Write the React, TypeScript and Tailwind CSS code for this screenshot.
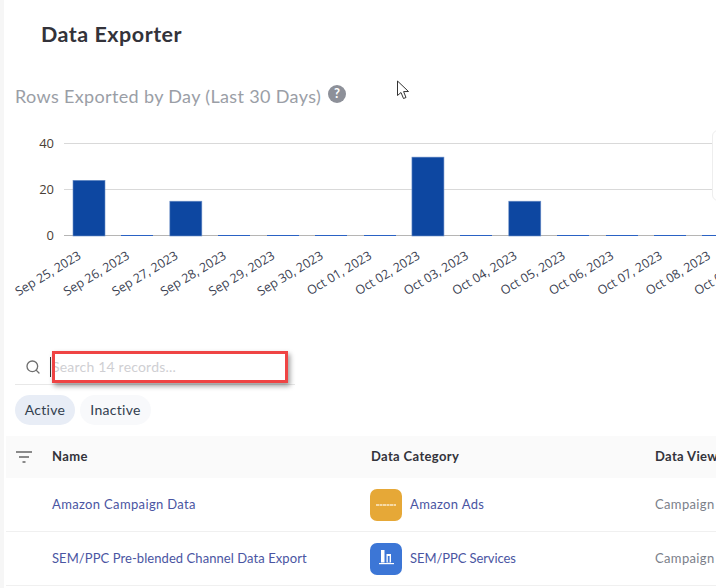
import type { ReactNode } from 'react';
import { Search } from 'lucide-react';

const days = [
  { label: 'Sep 25, 2023', value: 24 },
  { label: 'Sep 26, 2023', value: 0 },
  { label: 'Sep 27, 2023', value: 15 },
  { label: 'Sep 28, 2023', value: 0 },
  { label: 'Sep 29, 2023', value: 0 },
  { label: 'Sep 30, 2023', value: 0 },
  { label: 'Oct 01, 2023', value: 0 },
  { label: 'Oct 02, 2023', value: 34 },
  { label: 'Oct 03, 2023', value: 0 },
  { label: 'Oct 04, 2023', value: 15 },
  { label: 'Oct 05, 2023', value: 0 },
  { label: 'Oct 06, 2023', value: 0 },
  { label: 'Oct 07, 2023', value: 0 },
  { label: 'Oct 08, 2023', value: 0 },
  { label: 'Oct 09, 2023', value: 0 },
];

function Chart() {
  const baseY = 106;
  const unit = 2.32;
  return (
    <svg width="712" height="190" viewBox="0 0 712 190" className="block">
      {[13.5, 59.5].map((y) => (
        <line key={y} x1="60" x2="712" y1={y} y2={y} stroke="#d9d9d9" strokeWidth="1" />
      ))}
      <line x1="60" x2="712" y1={baseY - 0.5} y2={baseY - 0.5} stroke="#b5b5b5" strokeWidth="1" />
      {[
        { t: '40', y: 17.5 },
        { t: '20', y: 64 },
        { t: '0', y: 110 },
      ].map((a) => (
        <text key={a.t} x="50" y={a.y} textAnchor="end" fontSize="13" fill="#4a4036" fontFamily="'Open Sans', sans-serif">
          {a.t}
        </text>
      ))}
      {days.map((d, i) => {
        const x = 69 + i * 48.42;
        const h = d.value ? d.value * unit : 1;
        return (
          <rect
            key={d.label}
            x={x}
            y={baseY - h}
            width="32"
            height={h}
            fill={d.value ? '#0d47a1' : '#2a62c4'}
            stroke="#6c8fc7"
            strokeWidth={d.value ? 0.6 : 0}
            shapeRendering={d.value ? 'auto' : 'crispEdges'}
          />
        );
      })}
      {days.map((d, i) => {
        const x = 78 + i * 48.42;
        return (
          <text
            key={d.label}
            x={x}
            y="128"
            textAnchor="end"
            fontSize="12.5"
            fill="#3c4252"
            fontFamily="'Open Sans', sans-serif"
            transform={`rotate(-31 ${x} 128)`}
          >
            {d.label}
          </text>
        );
      })}
    </svg>
  );
}

export default function App() {
  return (
    <div className="relative flex h-[588px] w-[716px] overflow-hidden bg-white font-['Lato',sans-serif]">
      <div className="w-[4px] shrink-0 bg-[#f6f6f6]" />

      <div className="min-w-0 flex-1">
        <h1 className="pl-[37px] pt-[20px] text-[21.5px] font-bold leading-[28px] tracking-[0.5px] text-[#33333a]">
          Data Exporter
        </h1>

        <div className="mt-[34px] flex items-center pl-[11px]">
          <span className="text-[18px] leading-[28px] tracking-[0.35px] text-[#9a9ea6]">
            Rows Exported by Day (Last 30 Days)
          </span>
          <span className="mb-[4px] ml-[7px] flex h-[18px] w-[18px] items-center justify-center rounded-full bg-[#8d9099] text-[13px] font-bold text-white">
            ?
          </span>
        </div>

        <div className="mt-[20px]">
          <Chart />
        </div>

        <div className="ml-[11px] mt-[30px] flex h-[35px] w-[280px] items-center border-b border-[#e8e8e8]">
          <Search className="ml-[10px] h-[16px] w-[16px] text-[#6f6f6f]" strokeWidth={2} />
          <span className="ml-[9px] h-[20px] w-px bg-[#333]" />
          <span className="ml-px pb-px text-[14px] tracking-[0.2px] text-[#cfcfd3]">Search 14 records...</span>
        </div>

        <div className="ml-[11px] mt-[10px] flex gap-[5px]">
          <span className="flex h-[30px] w-[60px] items-center justify-center rounded-full bg-[#e8edf6] pb-[2px] text-[14px] tracking-[0.3px] text-[#33404f]">
            Active
          </span>
          <span className="flex h-[30px] w-[71px] items-center justify-center rounded-full bg-[#f8f9fb] pb-[2px] text-[14px] tracking-[0.3px] text-[#33404f]">
            Inactive
          </span>
        </div>

        <div className="ml-[2px] mt-[11px]">
          <div className="grid h-[42px] grid-cols-[46px_319px_1fr] items-center bg-[#fafafa] text-[13px] font-bold tracking-[0.35px] text-[#33333a]">
            <svg className="ml-[10px]" width="16" height="12" viewBox="0 0 16 12">
              <path d="M0 1 H16 M3 6 H13 M6.5 11 H9.5" stroke="#666" strokeWidth="1.5" />
            </svg>
            <span>Name</span>
            <div className="grid grid-cols-[284px_1fr]">
              <span>Data Category</span>
              <span className="whitespace-nowrap">Data View</span>
            </div>
          </div>

          <Row name="Amazon Campaign Data" category="Amazon Ads" icon={<AmazonIcon />} />
          <Row
            name="SEM/PPC Pre-blended Channel Data Export"
            category="SEM/PPC Services"
            icon={<SemIcon />}
            nameClass="tracking-[0.07px]"
            categoryClass="tracking-[-0.08px]"
          />
        </div>
      </div>

      {/* tooltip edge peeking in from the right of the chart */}
      <div className="absolute left-[712px] top-[130px] h-[71px] w-[20px] rounded-md border border-[#eeeeee] bg-white" />

      {/* annotation box drawn over the search field */}
      <div className="absolute left-[52px] top-[351px] h-[32px] w-[236px] border-[3px] border-[#ef4444] shadow-[2px_3px_5px_rgba(0,0,0,0.4)]" />

      {/* mouse pointer */}
      <svg className="absolute left-[396px] top-[80px]" width="16" height="20" viewBox="0 0 16 20">
        <path d="M1.5 1 V15.5 L5 12.5 L7.5 18.5 L10 17.5 L7.6 11.6 L12.5 11.5 Z" fill="#fff" stroke="#333" strokeWidth="1" strokeLinejoin="round" />
      </svg>
    </div>
  );
}

function Row({
  name,
  category,
  icon,
  nameClass = '',
  categoryClass = '',
}: {
  name: string;
  category: string;
  icon: ReactNode;
  nameClass?: string;
  categoryClass?: string;
}) {
  return (
    <div className="grid h-[54px] grid-cols-[46px_319px_1fr] items-center border-b border-[#f0f0f0] text-[13px] tracking-[0.35px]">
      <span />
      <span className={`pt-px text-[#4a55a2] ${nameClass}`}>{name}</span>
      <div className="grid grid-cols-[284px_1fr] items-center">
        <div className="-ml-px flex items-center gap-[8px]">
          {icon}
          <span className={`pt-px text-[#4a55a2] ${categoryClass}`}>{category}</span>
        </div>
        <span className="pt-px text-[#7b7f8a]">Campaign</span>
      </div>
    </div>
  );
}

function AmazonIcon() {
  return (
    <div className="flex h-[32px] w-[32px] items-center justify-center rounded-[7px] bg-[#e6a837]">
      <svg width="22" height="4" viewBox="0 0 22 4">
        <path d="M1 2 H21" stroke="#fbeacb" strokeWidth="1.4" strokeDasharray="3 0.5" />
      </svg>
    </div>
  );
}

function SemIcon() {
  return (
    <div className="flex h-[32px] w-[32px] items-center justify-center rounded-[7px] bg-[#3c76d6]">
      <svg width="20" height="20" viewBox="0 0 20 20">
        <rect x="5" y="1" width="3.5" height="12.5" fill="#fff" />
        <rect x="10.5" y="5" width="4.5" height="8.5" fill="#fff" />
        <rect x="11.8" y="7" width="1.8" height="6.5" fill="#3c76d6" />
        <rect x="3" y="14" width="15" height="1.2" fill="#fff" />
      </svg>
    </div>
  );
}
